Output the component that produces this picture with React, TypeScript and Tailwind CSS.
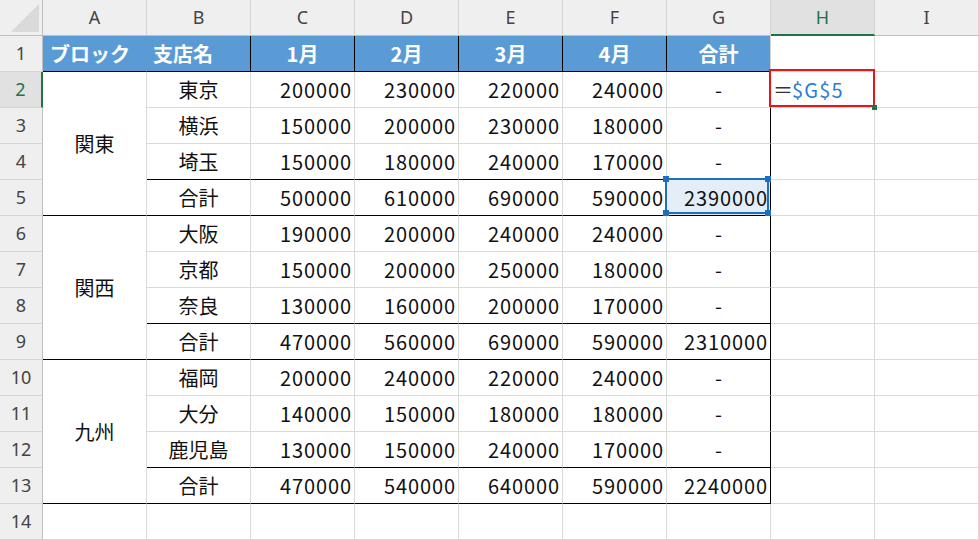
const cols = ["A", "B", "C", "D", "E", "F", "G", "H", "I"];

type Row = [string, number, number, number, number, number | string];

const groups: { block: string; rows: Row[] }[] = [
  {
    block: "関東",
    rows: [
      ["東京", 200000, 230000, 220000, 240000, "-"],
      ["横浜", 150000, 200000, 230000, 180000, "-"],
      ["埼玉", 150000, 180000, 240000, 170000, "-"],
      ["合計", 500000, 610000, 690000, 590000, 2390000],
    ],
  },
  {
    block: "関西",
    rows: [
      ["大阪", 190000, 200000, 240000, 240000, "-"],
      ["京都", 150000, 200000, 250000, 180000, "-"],
      ["奈良", 130000, 160000, 200000, 170000, "-"],
      ["合計", 470000, 560000, 690000, 590000, 2310000],
    ],
  },
  {
    block: "九州",
    rows: [
      ["福岡", 200000, 240000, 220000, 240000, "-"],
      ["大分", 140000, 150000, 180000, 180000, "-"],
      ["鹿児島", 130000, 150000, 240000, 170000, "-"],
      ["合計", 470000, 540000, 640000, 590000, 2240000],
    ],
  },
];

const RowHead = ({ n }: { n: number }) => (
  <div
    className={
      n === 2
        ? "flex items-center justify-center border-b border-b-[#d4d4d4] border-r-2 border-r-[#217346] bg-[#e1e1e1] text-[#217346] font-['Noto_Sans',sans-serif] text-[18px]"
        : "flex items-center justify-center border-b border-b-[#d4d4d4] border-r border-r-[#bfbfbf] bg-[#efefef] text-[#444] font-['Noto_Sans',sans-serif] text-[18px]"
    }
  >
    {n}
  </div>
);

const App = () => {
  return (
    <div className="w-[979px] h-[540px] overflow-hidden bg-white font-['Noto_Sans_CJK_JP',sans-serif] text-[20px] text-[#111]">
      <div className="grid grid-cols-[43px_repeat(9,104px)] grid-rows-[repeat(15,36px)]">
        {/* corner */}
        <div className="flex items-end justify-end border-r border-b border-r-[#bfbfbf] border-b-[#bfbfbf] bg-[#efefef] pr-[2px] pb-[2px]">
          <svg width="30" height="30" viewBox="0 0 30 30">
            <polygon points="29,1 29,29 1,29" fill="#dadada" />
          </svg>
        </div>
        {cols.map((c) => (
          <div
            key={c}
            className={
              c === "H"
                ? "flex items-center justify-center border-r border-r-[#d4d4d4] border-b-2 border-b-[#217346] bg-[#e1e1e1] text-[#217346] font-['Noto_Sans',sans-serif] text-[18px]"
                : "flex items-center justify-center border-r border-r-[#d4d4d4] border-b border-b-[#bfbfbf] bg-[#efefef] text-[#444] font-['Noto_Sans',sans-serif] text-[18px]"
            }
          >
            {c}
          </div>
        ))}

        {/* row 1 */}
        <RowHead n={1} />
        <div className="flex items-center pl-[7px] bg-[#5b9bd5] border-b border-b-black border-r border-r-[#5b9bd5] text-white font-bold">
          ブロック
        </div>
        <div className="flex items-center pl-[6px] bg-[#5b9bd5] border-b border-b-black border-r border-r-black text-white font-bold">
          支店名
        </div>
        {["1月", "2月", "3月", "4月"].map((m) => (
          <div
            key={m}
            className="flex items-center justify-center bg-[#5b9bd5] border-b border-b-black border-r border-r-black text-white font-bold"
          >
            {m}
          </div>
        ))}
        <div className="flex items-center justify-center bg-[#5b9bd5] border-b border-b-black border-r border-r-[#d4d4d4] text-white font-bold">
          合計
        </div>
        <div className="border-b border-r border-[#dadada]" />
        <div className="border-b border-r border-[#dadada]" />

        {groups.map((g, gi) =>
          g.rows.map((r, ri) => {
            const n = 2 + gi * 4 + ri;
            const last = ri === 3;
            const beforeTotal = ri === 2;
            const bottom =
              last || beforeTotal ? "border-b-black" : "border-b-[#dadada]";
            return [
              <RowHead key={`h${n}`} n={n} />,
              ri === 0 ? (
                <div
                  key={`a${n}`}
                  className="row-span-4 flex items-center justify-center border-b border-b-black border-r border-r-[#dadada]"
                >
                  {g.block}
                </div>
              ) : null,
              <div
                key={`b${n}`}
                className={`flex items-center justify-center border-b border-r border-r-[#dadada] ${bottom}`}
              >
                {r[0]}
              </div>,
              ...[r[1], r[2], r[3], r[4]].map((v, vi) => (
                <div
                  key={`v${n}-${vi}`}
                  className={`flex items-center justify-end pr-[2px] tracking-[0.9px] border-b border-r border-r-[#dadada] ${bottom}`}
                >
                  {v}
                </div>
              )),
              <div
                key={`g${n}`}
                className={
                  r[5] === "-"
                    ? `flex items-center justify-center border-b border-r border-r-black ${bottom}`
                    : n === 5
                      ? `relative flex items-center justify-end pr-[2px] tracking-[0.9px] bg-[#e4eef8] border-b border-r border-r-black ${bottom}`
                      : `flex items-center justify-end pr-[2px] tracking-[0.9px] border-b border-r border-r-black ${bottom}`
                }
              >
                {r[5]}
                {n === 5 && (
                  <div className="absolute -left-[2px] -top-[2px] right-[1px] bottom-[1px] border-2 border-[#1b6ec2]">
                    <div className="absolute -left-[4px] -top-[4px] w-[6px] h-[6px] bg-[#1b6ec2]" />
                    <div className="absolute -right-[4px] -top-[4px] w-[6px] h-[6px] bg-[#1b6ec2]" />
                    <div className="absolute -left-[4px] -bottom-[4px] w-[6px] h-[6px] bg-[#1b6ec2]" />
                    <div className="absolute -right-[4px] -bottom-[4px] w-[6px] h-[6px] bg-[#1b6ec2]" />
                  </div>
                )}
              </div>,
              n === 2 ? (
                <div
                  key={`hh${n}`}
                  className="relative flex items-center pl-[2px] border-b border-r border-[#dadada]"
                >
                  <span className="-mr-[1px] text-[#333]">＝</span>
                  <span className="tracking-[1.2px] text-[#2b7cd3]">$G$5</span>
                  <div className="absolute -left-[2px] -top-[3px] -right-[1px] bottom-0 border-2 border-[#e8141a]" />
                  <div className="absolute -right-[3px] -bottom-[3px] w-[5px] h-[5px] bg-[#217346]" />
                </div>
              ) : (
                <div key={`hh${n}`} className="border-b border-r border-[#dadada]" />
              ),
              <div key={`i${n}`} className="border-b border-r border-[#dadada]" />,
            ];
          })
        )}

        {/* row 14 */}
        <RowHead n={14} />
        {cols.map((c) => (
          <div key={`e${c}`} className="border-b border-r border-[#dadada]" />
        ))}
      </div>
    </div>
  );
};

export default App;
